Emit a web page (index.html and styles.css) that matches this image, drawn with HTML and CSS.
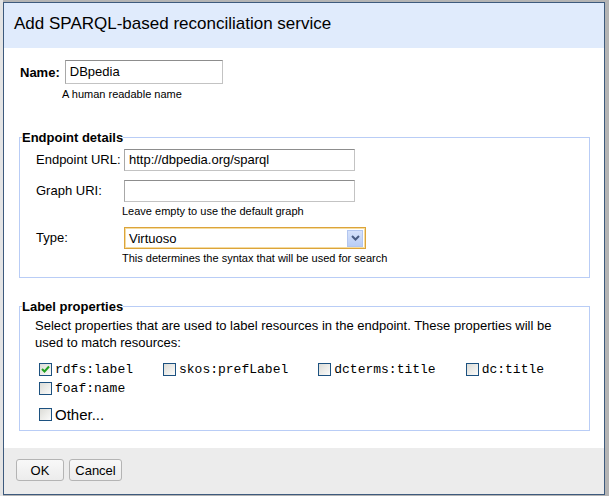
FILE: index.html
```html
<!DOCTYPE html>
<html>
<head>
<meta charset="utf-8">
<link rel="stylesheet" href="styles.css">
</head>
<body>
<div class="dialog">
  <div class="header">Add SPARQL-based reconciliation service</div>
  <div class="content">
    <div class="name-row">
      <span class="name-label">Name:</span>
      <div class="text-input name-input">DBpedia</div>
    </div>
    <div class="hint name-hint">A human readable name</div>

    <fieldset class="group group-endpoint">
      <legend class="group-title">Endpoint details</legend>
      <div class="form-grid">
        <span class="field-label">Endpoint URL:</span>
        <div class="field">
          <div class="text-input wide-input">http://dbpedia.org/sparql</div>
        </div>
        <span class="field-label">Graph URI:</span>
        <div class="field">
          <div class="text-input wide-input"></div>
          <div class="hint field-hint">Leave empty to use the default graph</div>
        </div>
        <span class="field-label">Type:</span>
        <div class="field">
          <div class="select">
            <span class="select-value">Virtuoso</span>
            <span class="select-arrow">
              <svg width="9" height="6" viewBox="0 0 9 6"><path d="M1 1 L4.5 4.5 L8 1" fill="none" stroke="#4a5d84" stroke-width="2"/></svg>
            </span>
          </div>
          <div class="hint field-hint">This determines the syntax that will be used for search</div>
        </div>
      </div>
    </fieldset>

    <fieldset class="group group-labels">
      <legend class="group-title">Label properties</legend>
      <div class="labels-inner">
        <p class="desc">Select properties that are used to label resources in the endpoint. These properties will be used to match resources:</p>
        <div class="props">
          <label class="prop"><span class="box checked"><svg width="11" height="11" viewBox="0 0 11 11"><path d="M2 5 L4.5 7.5 L9 2.5" fill="none" stroke="#21a121" stroke-width="2"/></svg></span><span class="mono">rdfs:label</span></label>
          <label class="prop"><span class="box"></span><span class="mono">skos:prefLabel</span></label>
          <label class="prop"><span class="box"></span><span class="mono">dcterms:title</span></label>
          <label class="prop"><span class="box"></span><span class="mono">dc:title</span></label>
          <label class="prop"><span class="box"></span><span class="mono">foaf:name</span></label>
        </div>
        <label class="prop other"><span class="box"></span><span class="other-text">Other...</span></label>
      </div>
    </fieldset>
  </div>
  <div class="footer">
    <button class="btn btn-ok">OK</button>
    <button class="btn btn-cancel">Cancel</button>
  </div>
</div>
</body>
</html>
```

FILE: styles.css
```css
html, body {
  margin: 0;
  padding: 0;
}
body {
  width: 609px;
  height: 496px;
  overflow: hidden;
  background: linear-gradient(to right, #e4e4e4 0 3px, #b4b4b4 3px);
  font-family: Arial, "Liberation Sans", sans-serif;
  font-size: 13px;
  color: #000;
}
.dialog {
  box-sizing: border-box;
  margin: 2px 0 0 3px;
  width: 602px;
  height: 493px;
  border: 1px solid #3d5a7d;
  background: #fff;
  display: flex;
  flex-direction: column;
}
.header {
  background: #e0ebfc;
  height: 45px;
  box-sizing: border-box;
  padding: 11px 10px 0 10px;
  font-size: 17px;
  line-height: 20px;
}
.content {
  flex: 1;
  padding: 12px 14px 0 15px;
}
.name-row {
  display: flex;
  align-items: center;
  margin-left: 1px;
}
.name-label {
  font-weight: bold;
  margin-right: 5px;
}
.text-input {
  box-sizing: border-box;
  height: 22px;
  border: 1px solid #c3c3c3;
  border-top-color: #8d8d8d;
  border-left-color: #a8a8a8;
  padding: 0 4px;
  line-height: 20px;
  background: #fff;
}
.name-input {
  width: 158px;
  height: 24px;
  line-height: 22px;
}
.hint {
  font-size: 11px;
  line-height: 13px;
}
.name-hint {
  margin: 4px 0 0 43px;
}
.group {
  margin: 29px 0 0 0;
  border: 1px solid #b9cdf6;
  padding: 0 2px;
  min-width: 0;
}
.group-title {
  font-weight: bold;
  font-size: 13px;
  line-height: 15px;
  padding: 0;
  margin: 0;
}
.form-grid {
  display: grid;
  grid-template-columns: 88px auto;
  row-gap: 9px;
  padding: 4px 0 12px 14px;
  align-items: start;
}
.field-label {
  line-height: 22px;
}
.wide-input {
  width: 231px;
}
.field-hint {
  margin: 3px 0 0 -2px;
}
.select {
  box-sizing: border-box;
  width: 242px;
  height: 22px;
  border: 1px solid #dca43a;
  box-shadow: inset 0 0 0 1px #f5dca0;
  display: flex;
  align-items: center;
  justify-content: space-between;
  padding: 0 2px 0 4px;
}
.select-arrow {
  width: 16px;
  height: 17px;
  box-sizing: border-box;
  background: linear-gradient(#d6e2fb, #b9cdf6);
  border: 1px solid #b3c6ef;
  display: flex;
  align-items: center;
  justify-content: center;
}
.group-labels {
  margin-top: 21px;
}
.labels-inner {
  padding: 3px 14px 6px 13px;
}
.desc {
  margin: 0;
  line-height: 17px;
}
.props {
  display: flex;
  flex-wrap: wrap;
  column-gap: 26px;
  margin-top: 9px;
}
.prop {
  display: flex;
  align-items: center;
  height: 19px;
}
.box {
  box-sizing: border-box;
  width: 13px;
  height: 13px;
  margin: 0 3px 0 4px;
  border: 1px solid #1c5180;
  background: linear-gradient(135deg, #dcdcd7, #fbfbfa);
  display: flex;
  align-items: center;
  justify-content: center;
}
.mono {
  font-family: "Liberation Mono", "Courier New", monospace;
  font-size: 13px;
}
.other {
  margin-top: 6px;
  height: 20px;
}
.other-text {
  font-size: 15px;
}
.footer {
  height: 46px;
  box-sizing: border-box;
  background: #ececec;
  padding: 11px 0 0 12px;
  display: flex;
  align-items: flex-start;
  gap: 5px;
}
.btn {
  font-family: Arial, "Liberation Sans", sans-serif;
  font-size: 13px;
  height: 22px;
  border: 1px solid #b4b4b4;
  border-radius: 3px;
  background: linear-gradient(#f8f8f8, #ececec);
  color: #000;
  padding: 0;
}
.btn-ok {
  width: 48px;
}
.btn-cancel {
  width: 53px;
}
```
